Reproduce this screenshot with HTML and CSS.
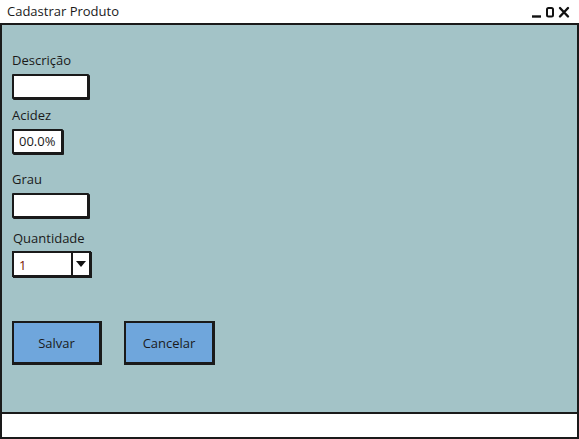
FILE: index.html
```html
<!DOCTYPE html>
<html lang="pt">
<head>
<meta charset="utf-8">
<title>Cadastrar Produto</title>
<link rel="stylesheet" href="styles.css">
</head>
<body>
<div class="window">
  <div class="titlebar">
    <span class="title">Cadastrar Produto</span>
    <span class="controls">
      <svg width="40" height="14" viewBox="0 0 40 14" aria-hidden="true">
        <path d="M1 11.5 H10" stroke="#111" stroke-width="2.4"/>
        <rect x="16" y="3" width="6" height="8.5" rx="1.5" fill="none" stroke="#111" stroke-width="2"/>
        <path d="M29 3 L37 11.5 M37 3 L29 11.5" stroke="#111" stroke-width="2.4" stroke-linecap="round"/>
      </svg>
    </span>
  </div>
  <div class="content">
    <div class="field">
      <label class="label">Descrição</label>
      <div class="input wide"></div>
    </div>
    <div class="field">
      <label class="label">Acidez</label>
      <div class="input short">00.0%</div>
    </div>
    <div class="field grau">
      <label class="label">Grau</label>
      <div class="input wide"></div>
    </div>
    <div class="field">
      <label class="label indent">Quantidade</label>
      <div class="combo">
        <span class="combo-value">1</span>
        <span class="combo-btn">
          <svg width="10" height="6" viewBox="0 0 10 6" aria-hidden="true"><path d="M0 0 H10 L5 6 Z" fill="#111"/></svg>
        </span>
      </div>
    </div>
    <div class="buttons">
      <div class="btn">Salvar</div>
      <div class="btn">Cancelar</div>
    </div>
  </div>
  <div class="statusbar"></div>
</div>
</body>
</html>
```

FILE: styles.css
```css
* { box-sizing: border-box; }
html, body { margin: 0; padding: 0; background: #ffffff; }
body {
  font-family: "Open Sans", "Noto Sans", sans-serif;
  font-size: 13px;
  color: #1a1a1a;
}
.window {
  width: 579px;
  height: 439px;
  display: flex;
  flex-direction: column;
}
.titlebar {
  height: 25px;
  flex: none;
  background: #fff;
  border-bottom: 2px solid #1a1a1a;
  display: flex;
  align-items: center;
  justify-content: space-between;
  padding: 0 8px 1px 7px;
}
.title { font-size: 13px; }
.controls { display: flex; align-items: center; padding-top: 2px; }
.content {
  flex: 1;
  background: #a3c3c7;
  border-left: 2px solid #1a1a1a;
  border-right: 2px solid #1a1a1a;
  padding: 27px 0 0 10px;
  display: flex;
  flex-direction: column;
}
.field { display: flex; flex-direction: column; margin-bottom: 8px; }
.grau { margin-top: 9px; margin-bottom: 12px; }
.label { line-height: 17px; height: 17px; margin-bottom: 5px; }
.indent { padding-left: 1px; margin-bottom: 4px; }
.input {
  height: 25px;
  background: #fff;
  border: 2px solid #1a1a1a;
  border-radius: 1px;
  box-shadow: 1px 1px 0 #1a1a1a;
  padding: 2px 0 0 5px;
  line-height: 17px;
  font-size: 13px;
}
.wide { width: 77px; }
.short { width: 51px; }
.combo {
  width: 79px;
  height: 26px;
  background: #fff;
  border: 2px solid #1a1a1a;
  box-shadow: 1px 1px 0 #1a1a1a;
  display: flex;
}
.combo-value {
  flex: 1;
  color: #7a1400;
  padding: 3px 0 0 5px;
  border-right: 2px solid #1a1a1a;
}
.combo-btn {
  width: 16px;
  display: flex;
  align-items: center;
  justify-content: center;
}
.buttons {
  display: flex;
  gap: 22px;
  margin-top: 36px;
}
.btn {
  height: 44px;
  background: #6fa6dc;
  border: 2px solid #1a1a1a;
  border-right-width: 3px;
  border-bottom-width: 3px;
  display: flex;
  align-items: center;
  justify-content: center;
  font-size: 13px;
}
.btn:first-child { width: 90px; }
.btn:last-child { width: 91px; }
.statusbar {
  height: 27px;
  flex: none;
  background: #fff;
  border: 2px solid #1a1a1a;
}
```
